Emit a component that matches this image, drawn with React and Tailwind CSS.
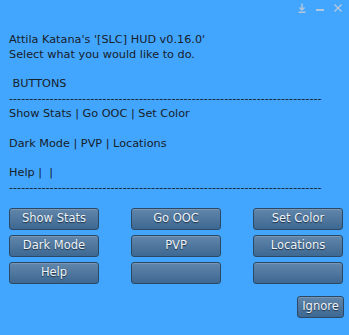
import React from 'react';

const lines = [
  "Attila Katana's '[SLC] HUD v0.16.0'",
  'Select what you would like to do.',
  '',
  ' BUTTONS',
  '-'.repeat(77),
  'Show Stats | Go OOC | Set Color',
  '',
  'Dark Mode | PVP | Locations',
  '',
  'Help |  |',
  '-'.repeat(77),
];

const buttons = ['Show Stats', 'Go OOC', 'Set Color', 'Dark Mode', 'PVP', 'Locations', 'Help', '', ''];

const HudButton = ({ label, className = '' }) => (
  <button
    className={`h-[22px] rounded-[3px] border border-[#2b4864] bg-gradient-to-b from-[#6286ab] to-[#3d6891] text-[11.5px] leading-none text-[#eef3f8] [text-shadow:0_1px_1px_#1c2f44] shadow-[inset_0_1px_0_rgba(255,255,255,0.15)] ${className}`}
  >
    {label}
  </button>
);

const App = () => {
  return (
    <div className="relative h-[335px] w-[349px] overflow-hidden bg-[#43a6fe] font-['DejaVu_Sans',sans-serif] text-[#16202a]">
      <div className="absolute right-[6px] top-[3px] flex items-center gap-[8px] text-[#b3c8dc]">
        <svg width="10" height="10" viewBox="0 0 10 10" fill="none" stroke="currentColor" strokeWidth="1.4">
          <path d="M5 0.5v6M2.5 4.5L5 7l2.5-2.5M1.5 9.3h7" />
        </svg>
        <svg width="10" height="10" viewBox="0 0 10 10" fill="none" stroke="currentColor" strokeWidth="2">
          <path d="M1 7h8" />
        </svg>
        <svg width="10" height="10" viewBox="0 0 10 10" fill="none" stroke="currentColor" strokeWidth="1.3">
          <path d="M1.5 1.5l7 7M8.5 1.5l-7 7" />
        </svg>
      </div>

      <div className="pl-[9px] pt-[33px] text-[11.25px] leading-[14.8px] whitespace-pre">
        {lines.map((l, i) => (
          <div key={i} className="h-[14.8px]">{l}</div>
        ))}
      </div>

      <div className="mt-[12px] grid grid-cols-[90px_90px_90px] gap-x-[32px] gap-y-[5px] pl-[9px]">
        {buttons.map((b, i) => (
          <HudButton key={i} label={b} />
        ))}
      </div>

      <div className="mt-[12px] flex justify-end pr-[5px]">
        <HudButton label="Ignore" className="w-[47px]" />
      </div>
    </div>
  );
};

export default App;
